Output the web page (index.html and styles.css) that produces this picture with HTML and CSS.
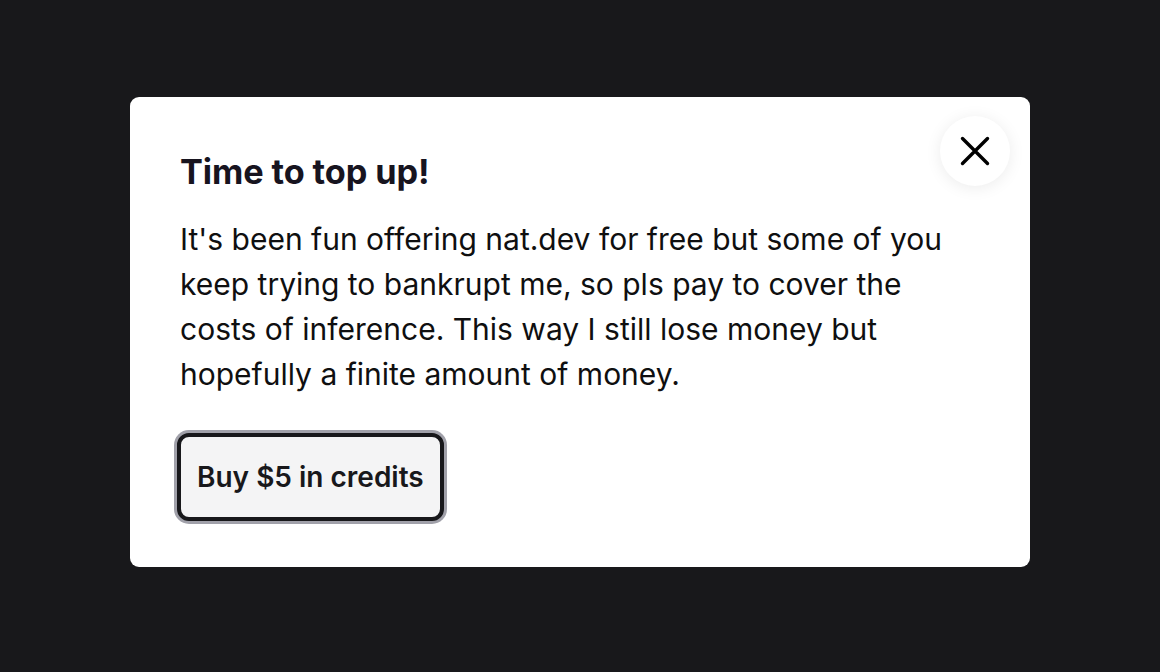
FILE: index.html
```html
<!DOCTYPE html>
<html>
<head>
<meta charset="utf-8">
<link rel="stylesheet" href="styles.css">
</head>
<body>
<div class="overlay">
  <div class="modal">
    <button class="close" aria-label="Close">
      <svg width="30" height="30" viewBox="0 0 30 30" fill="none" stroke="#000" stroke-width="3.4" stroke-linecap="round"><path d="M2.5 2.5L27.5 27.5M27.5 2.5L2.5 27.5"/></svg>
    </button>
    <h2 class="title">Time to top up!</h2>
    <p class="text">It's been fun offering nat.dev for free but some of you keep trying to bankrupt me, so pls pay to cover the costs of inference. This way I still lose money but hopefully a finite amount of money.</p>
    <div class="actions">
      <button class="buy">Buy $5 in credits</button>
    </div>
  </div>
</div>
</body>
</html>
```
FILE: styles.css
```css
html, body {
  margin: 0;
  padding: 0;
  background: #18181b;
}
body {
  font-family: Inter, "Noto Sans", sans-serif;
}
.overlay {
  height: 664px;
  display: flex;
  align-items: center;
  justify-content: center;
}
.modal {
  position: relative;
  box-sizing: border-box;
  width: 900px;
  height: 470px;
  background: #fff;
  border-radius: 9px;
  padding: 49px 50px 40px 50px;
  display: flex;
  flex-direction: column;
}
.title {
  margin: 0;
  font-size: 34.3px;
  font-weight: 700;
  line-height: 52px;
  color: #17141f;
  letter-spacing: -0.1px;
}
.text {
  margin: 19px 0 0 0;
  max-width: 790px;
  font-size: 30px;
  line-height: 45px;
  color: #0f0f10;
}
.actions {
  margin-top: 36px;
}
.buy {
  font-family: inherit;
  font-size: 28px;
  font-weight: 600;
  color: #18181b;
  background: #f4f4f5;
  border: 4px solid #18181b;
  border-radius: 12px;
  box-shadow: 0 0 0 3px #a1a1aa;
  padding: 0 16px;
  height: 88px;
  margin-left: -3px;
  cursor: pointer;
}
.close {
  position: absolute;
  top: 19px;
  right: 20px;
  width: 70px;
  height: 70px;
  border-radius: 50%;
  border: none;
  background: #fff;
  box-shadow: 0 2px 16px rgba(0,0,0,0.08);
  display: flex;
  align-items: center;
  justify-content: center;
  padding: 0;
  cursor: pointer;
}
```
